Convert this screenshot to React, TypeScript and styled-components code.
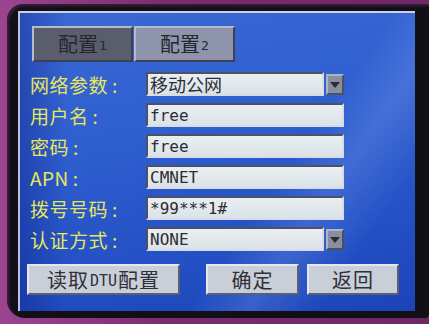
import { Fragment } from 'react';
import styled, { createGlobalStyle } from 'styled-components';

const GlobalStyle = createGlobalStyle`
  html, body {
    margin: 0;
    padding: 0;
    background: #7c2f72;
  }
`;

const cjk = `"Noto Sans CJK SC", "Noto Sans", sans-serif`;
const mono = `"DejaVu Sans Mono", "Liberation Mono", monospace`;

const Page = styled.div`
  width: 429px;
  height: 324px;
  box-sizing: border-box;
  padding: 4px 0 6px 7px;
  background: linear-gradient(90deg, #9b4590 0%, #7a2c70 40%, #6e2866 100%);
  overflow: hidden;
`;

const Bezel = styled.div`
  height: 100%;
  box-sizing: border-box;
  padding: 7px 14px 7px 11px;
  background: #121016;
  border-radius: 16px 2px 4px 18px;
  box-shadow: inset 2px 2px 3px rgba(90, 40, 90, 0.6);
`;

const Screen = styled.div`
  height: 100%;
  box-sizing: border-box;
  border-top: 2px solid #c9d2ea;
  border-left: 2px solid #b8c2e6;
  padding: 13px 0 0 10px;
  background:
    linear-gradient(125deg, rgba(255,255,255,0) 62%, rgba(150,180,250,0.22) 72%, rgba(255,255,255,0) 84%),
    linear-gradient(90deg, rgba(10,20,120,0.35) 0%, rgba(10,20,120,0) 12%),
    linear-gradient(170deg, #3a68d4 0%, #2f5ecf 40%, #2350c4 75%, #1c44b8 100%);
  font-family: ${cjk};
`;

const Tabs = styled.div`
  display: flex;
  margin-left: 2px;
`;

const Tab = styled.div<{ $active?: boolean }>`
  width: 101px;
  height: 36px;
  box-sizing: border-box;
  border: 2px solid #b4bccb;
  border-right-color: #3b4152;
  border-bottom-color: #3b4152;
  background: ${(p) => (p.$active ? '#5a5e6c' : '#8d94ac')};
  color: #25262e;
  display: flex;
  align-items: center;
  justify-content: center;
  font-size: 20px;
  line-height: 1;
  & + & {
    margin-left: 1px;
  }
`;

const Small = styled.span`
  font-family: ${mono};
  font-size: 13px;
  margin-left: 1px;
  align-self: flex-end;
  margin-bottom: 8px;
`;

const Form = styled.div`
  display: grid;
  grid-template-columns: 116px 198px;
  grid-auto-rows: 24px;
  row-gap: 7px;
  margin-top: 10px;
`;

const Label = styled.div`
  color: #e6e85c;
  font-size: 19px;
  display: flex;
  align-items: center;
  white-space: nowrap;
  letter-spacing: 0.5px;
`;

const Colon = styled.span`
  margin-left: 4px;
`;

const FieldWrap = styled.div`
  display: flex;
  gap: 2px;
`;

const Field = styled.div`
  flex: 1;
  box-sizing: border-box;
  height: 24px;
  border: 2px solid #d6dde6;
  border-top-color: #4b5266;
  border-left-color: #4b5266;
  background: linear-gradient(180deg, #e9eef1 0%, #dbe3e8 100%);
  color: #2b2d33;
  font-family: ${mono}, ${cjk};
  font-size: 16px;
  display: flex;
  align-items: center;
  padding-left: 2px;
  white-space: nowrap;
`;

const CjkValue = styled.span`
  font-family: ${cjk};
  font-size: 18px;
`;

const DropBtn = styled.div`
  width: 18px;
  height: 21px;
  margin-top: 2px;
  box-sizing: border-box;
  border: 2px solid #aeb4c4;
  border-right-color: #4b5164;
  border-bottom-color: #4b5164;
  background: #8a8fa0;
  display: flex;
  align-items: center;
  justify-content: center;
`;

const Buttons = styled.div`
  display: flex;
  margin: 13px 0 0 -3px;
`;

const Button = styled.div<{ $w: number; $gap: number }>`
  width: ${(p) => p.$w}px;
  margin-left: ${(p) => p.$gap}px;
  height: 31px;
  box-sizing: border-box;
  border: 2px solid #e4e8ee;
  border-right-color: #5a6070;
  border-bottom-color: #5a6070;
  background: #c9cfd9;
  color: #2f3038;
  font-size: 20px;
  display: flex;
  align-items: center;
  justify-content: center;
  letter-spacing: 1px;
`;

const Latin = styled.span`
  font-family: ${mono};
  font-size: 15px;
  letter-spacing: 0;
  margin: 2px 1px 0;
`;

const Arrow = () => (
  <svg width="10" height="6" viewBox="0 0 10 6">
    <path d="M0 0 H10 L5 6 Z" fill="#2a2c34" />
  </svg>
);

type Row = { label: string; value: React.ReactNode; drop?: boolean };

const rows: Row[] = [
  { label: '网络参数', value: <CjkValue>移动公网</CjkValue>, drop: true },
  { label: '用户名', value: 'free' },
  { label: '密码', value: 'free' },
  { label: 'APN', value: 'CMNET' },
  { label: '拨号号码', value: '*99***1#' },
  { label: '认证方式', value: 'NONE', drop: true },
];

export default function App() {
  return (
    <Page>
      <GlobalStyle />
      <Bezel>
        <Screen>
          <Tabs>
            <Tab $active>配置<Small>1</Small></Tab>
            <Tab>配置<Small>2</Small></Tab>
          </Tabs>
          <Form>
            {rows.map((r) => (
              <Fragment key={r.label}>
                <Label>
                  {r.label}
                  <Colon>:</Colon>
                </Label>
                <FieldWrap>
                  <Field>{r.value}</Field>
                  {r.drop && (
                    <DropBtn>
                      <Arrow />
                    </DropBtn>
                  )}
                </FieldWrap>
              </Fragment>
            ))}
          </Form>
          <Buttons>
            <Button $w={153} $gap={0}>
              读取<Latin>DTU</Latin>配置
            </Button>
            <Button $w={93} $gap={26}>确定</Button>
            <Button $w={92} $gap={8}>返回</Button>
          </Buttons>
        </Screen>
      </Bezel>
    </Page>
  );
}
